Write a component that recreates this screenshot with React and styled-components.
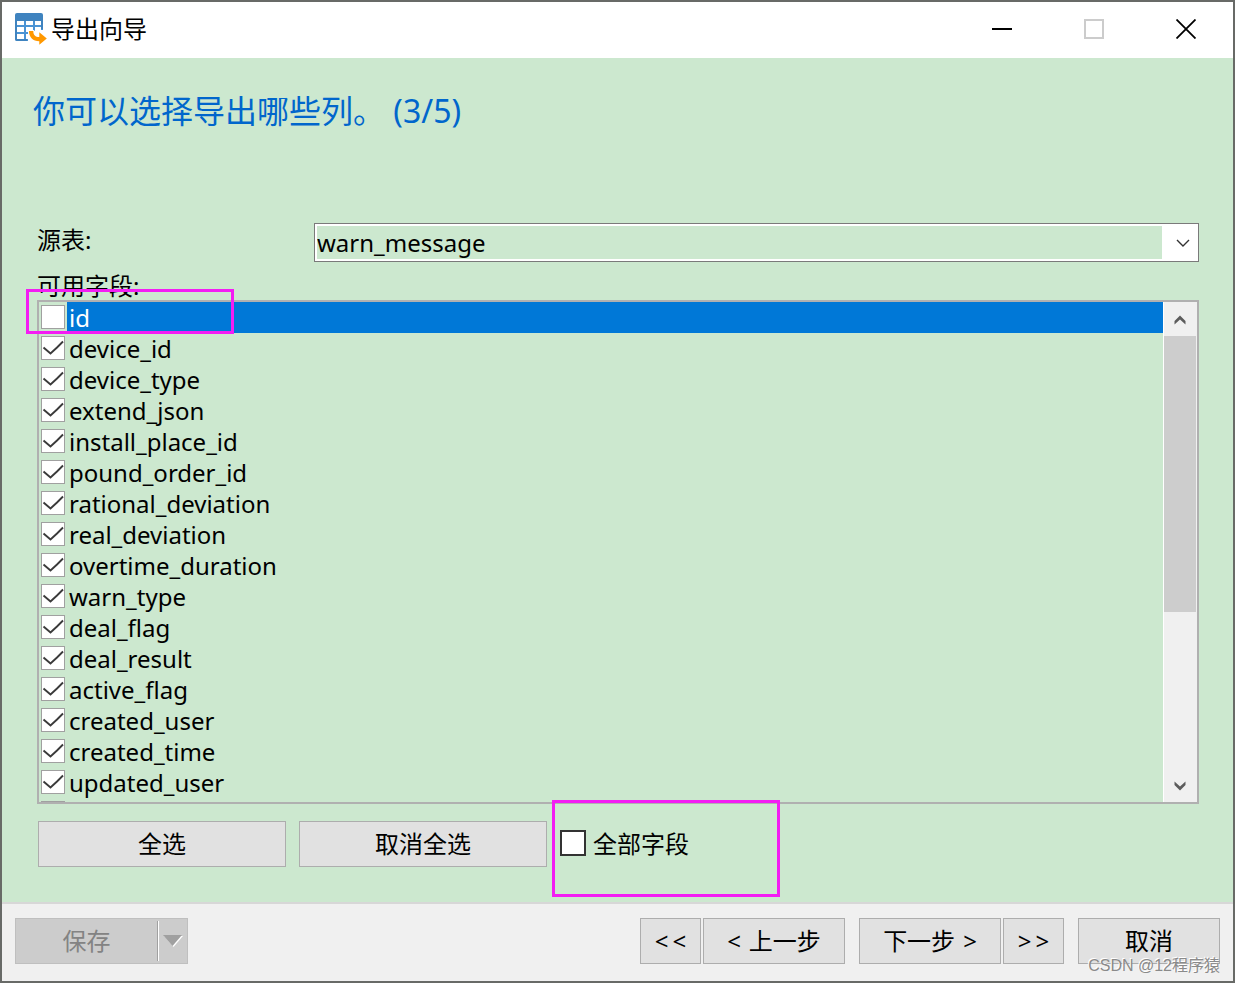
import React, { useState } from "react";
import styled, { createGlobalStyle } from "styled-components";

const colors = {
  paper: "#cce8cf",
  face: "#f0f0f0",
  button: "#e1e1e1",
  line: "#adadad",
  select: "#0078d7",
  title: "#0066cc",
  marker: "#f31df3",
};

const fields = [
  "id",
  "device_id",
  "device_type",
  "extend_json",
  "install_place_id",
  "pound_order_id",
  "rational_deviation",
  "real_deviation",
  "overtime_duration",
  "warn_type",
  "deal_flag",
  "deal_result",
  "active_flag",
  "created_user",
  "created_time",
  "updated_user",
  "",
];

const GlobalStyle = createGlobalStyle`
  *, *::before, *::after {
    box-sizing: border-box;
  }

  body {
    margin: 0;
    color: #000;
    font-family: "Noto Sans", "Noto Sans CJK SC", sans-serif;
    font-size: 24px;
  }

  button, select, input {
    margin: 0;
    color: inherit;
    font: inherit;
  }
`;

const Window = styled.div`
  position: relative;
  display: flex;
  flex-direction: column;
  height: 100vh;
  min-height: 640px;
  border: 2px solid #686a67;
  background: ${colors.paper};
`;

const TitleBar = styled.header`
  display: flex;
  align-items: center;
  height: 56px;
  padding: 0 1px 2px 13px;
  background: #fff;
`;

const Caption = styled.span`
  flex: 1;
  padding-left: 4px;
  line-height: 32px;
`;

const WindowButton = styled.button`
  display: flex;
  align-items: center;
  justify-content: center;
  width: 92px;
  height: 100%;
  padding: 0;
  border: none;
  background: none;
`;

const Content = styled.main`
  position: relative;
  display: flex;
  flex: 1;
  flex-direction: column;
  min-height: 0;
  padding: 28px 34px 35px 35px;
`;

const Heading = styled.h1`
  margin: 0 0 87px -4px;
  color: ${colors.title};
  font-size: 32px;
  font-weight: 400;
  line-height: 50px;
`;

const SourceRow = styled.div`
  display: flex;
  align-items: flex-start;
  margin-bottom: 10px;
`;

const SourceLabel = styled.label`
  width: 277px;
  line-height: 34px;
`;

const SelectBox = styled.div`
  position: relative;
  flex: 1;

  svg {
    position: absolute;
    top: 16px;
    right: 9px;
    pointer-events: none;
  }
`;

const Select = styled.select`
  display: block;
  width: 100%;
  height: 39px;
  padding: 2px 36px 2px 2px;
  border: 1px solid #7a7a7a;
  border-radius: 0;
  appearance: none;
  background: linear-gradient(${colors.paper}, ${colors.paper}) content-box, #fff;
`;

const FieldsLabel = styled.div`
  line-height: 28px;
`;

const FieldBox = styled.div`
  display: flex;
  flex: 1;
  min-height: 0;
  border: 2px solid #b0b0b0;
`;

const FieldList = styled.div`
  flex: 1;
  overflow: hidden;
`;

const FieldRow = styled.label`
  display: flex;
  align-items: flex-start;
  column-gap: 2px;
  height: 31px;
  padding-left: 2px;
`;

const FieldName = styled.span`
  flex: 1;
  padding-left: 2px;
  line-height: 31px;
  color: ${({ $active }) => ($active ? "#fff" : "inherit")};
  background: ${({ $active }) => ($active ? colors.select : "none")};
`;

const CheckCell = styled.span`
  display: grid;
  padding: ${({ $large }) => ($large ? "0 0 2px" : "3px 0 0")};

  input, svg {
    grid-area: 1 / 1;
  }

  svg {
    visibility: hidden;
    pointer-events: none;
  }

  input:checked + svg {
    visibility: visible;
  }
`;

const Tick = styled.input`
  width: ${({ $large }) => ($large ? 26 : 24)}px;
  height: ${({ $large }) => ($large ? 26 : 24)}px;
  border: ${({ $large }) => ($large ? "2px solid #333" : "1px solid #a0a0a0")};
  appearance: none;
  background: #fff;
`;

const ScrollBar = styled.div`
  display: flex;
  flex-direction: column;
  width: 34px;
  padding-right: 1px;
  border-left: 1px solid #fff;
  background: ${colors.face};
`;

const ScrollButton = styled.button`
  display: flex;
  align-items: center;
  justify-content: center;
  height: 34px;
  padding: 2px 0 0;
  border: none;
  background: none;
`;

const ScrollTrack = styled.div`
  flex: 1;
`;

const ScrollThumb = styled.div`
  height: 64%;
  background: #cdcdcd;
`;

const Actions = styled.div`
  display: flex;
  align-items: center;
  column-gap: 13px;
  margin-top: 17px;
  padding-left: 1px;
`;

const Button = styled.button`
  display: flex;
  align-items: center;
  justify-content: center;
  column-gap: ${({ $gap = 0 }) => $gap}px;
  width: ${({ $width }) => $width}px;
  height: 46px;
  padding: 0;
  border: 1px solid ${colors.line};
  background: ${colors.button};
  line-height: 44px;
  white-space: nowrap;
`;

const AllFields = styled.label`
  display: flex;
  align-items: center;
  column-gap: 7px;
  line-height: 46px;
`;

const Footer = styled.footer`
  display: flex;
  align-items: center;
  justify-content: space-between;
  padding: 14px 13px 17px;
  border-top: 2px solid #d7d7d7;
  background: ${colors.face};
`;

const SplitButton = styled.div`
  display: flex;
  align-items: center;
  height: 46px;
  border: 1px solid #bfbfbf;
  background: #ccc;
`;

const SplitPart = styled.button`
  display: flex;
  align-items: center;
  justify-content: center;
  width: ${({ $width }) => $width}px;
  height: 40px;
  padding: 0;
  border: none;
  background: none;
  color: #838383;
  line-height: 40px;

  & + & {
    border-left: 1px solid #a0a0a0;
    box-shadow: inset 1px 0 #fff;
  }
`;

const Steps = styled.div`
  display: flex;
  column-gap: 14px;
`;

const StepPair = styled.div`
  display: flex;
  column-gap: 2px;
`;

const Marker = styled.div`
  position: absolute;
  top: ${({ $top }) => $top}px;
  left: ${({ $left }) => $left}px;
  width: ${({ $width }) => $width}px;
  height: ${({ $height }) => $height}px;
  border: 3px solid ${colors.marker};
  pointer-events: none;
`;

const Watermark = styled.span`
  position: absolute;
  right: 13px;
  bottom: 3px;
  color: #8a8a8a;
  font-family: "Liberation Sans", "Noto Sans CJK SC", sans-serif;
  font-size: 16px;
  line-height: 24px;
  text-shadow: -1px -1px #fff;
  pointer-events: none;
`;

const TableIcon = () => (
  <svg width="32" height="32" viewBox="0 0 32 32" aria-hidden="true">
    <path d="M2 0h24q2 0 2 2v6H0V2q0-2 2-2z" fill="#3f83bf" />
    <path d="M0 8h28v10H13v10H2q-2 0-2-2z" fill="#4a93d4" />
    <path d="M0 8h2v18h10v2H2q-2 0-2-2zM26 8h2v8h-2z" fill="#3f83bf" />
    <path
      d="M2 8h7v4H2zM11 8h7v4h-7zM20 8h6v4h-6zM2 14h7v5H2zM11 14h7v5h-7zM20 14h6v5h-6zM2 21h7v5H2zM11 21h3v5h-3z"
      fill="#fff"
    />
    <path d="M13 17h6.300c0 4 2 6 4 6v-6H28v11H13z" fill="#fff" />
    <path
      d="M14 18h4.300c0 4 2 6 6 6v-4.700l7.500 6.200-7.500 6.200v-3.400C18 28.300 14 24.300 14 18z"
      fill="#ff9800"
    />
  </svg>
);

const Chevron = ({ up }) => (
  <svg width="12" height="10" viewBox="0 0 12 10" aria-hidden="true">
    <path
      d={
        up
          ? "M6 .5 11.500 6v3.500L6 4.500.5 9.500V6z"
          : "M6 9.500 11.500 4V.5L6 5.500.5.5V4z"
      }
      fill="#5c5c5c"
    />
  </svg>
);

const CheckBox = ({ large, ...props }) => (
  <CheckCell $large={large}>
    <Tick type="checkbox" $large={large} {...props} />
    <svg width="24" height="24" viewBox="0 0 24 24" aria-hidden="true">
      <path
        d="M2.500 11.500 9.500 17.500 16 11.500 22 5.500"
        fill="none"
        stroke="#3a3a3a"
        strokeWidth="1.900"
      />
    </svg>
  </CheckCell>
);

const App = () => {
  const [active, setActive] = useState("id");

  return (
    <>
      <GlobalStyle />
      <Window>
        <TitleBar>
          <TableIcon />
          <Caption>导出向导</Caption>
          <WindowButton aria-label="最小化">
            <svg width="20" height="20" viewBox="0 0 20 20">
              <path d="M0 10h20" stroke="#000" strokeWidth="2" />
            </svg>
          </WindowButton>
          <WindowButton aria-label="最大化" disabled>
            <svg width="20" height="20" viewBox="0 0 20 20">
              <path
                d="M1 1h18v18H1z"
                fill="none"
                stroke="#ccc"
                strokeWidth="2"
              />
            </svg>
          </WindowButton>
          <WindowButton aria-label="关闭">
            <svg width="20" height="20" viewBox="0 0 20 20">
              <path
                d="M.5.5l19 19M19.500.5l-19 19"
                stroke="#000"
                strokeWidth="1.800"
              />
            </svg>
          </WindowButton>
        </TitleBar>

        <Content>
          <Heading>你可以选择导出哪些列。 (3/5)</Heading>
          <SourceRow>
            <SourceLabel htmlFor="source">源表:</SourceLabel>
            <SelectBox>
              <Select id="source">
                <option>warn_message</option>
              </Select>
              <svg width="14" height="9" viewBox="0 0 14 9" aria-hidden="true">
                <path
                  d="M1 1l6 6 6-6"
                  fill="none"
                  stroke="#333"
                  strokeWidth="1.400"
                />
              </svg>
            </SelectBox>
          </SourceRow>

          <FieldsLabel id="fields">可用字段:</FieldsLabel>
          <FieldBox role="group" aria-labelledby="fields">
            <FieldList>
              {fields.map((field) => (
                <FieldRow key={field} onClick={() => setActive(field)}>
                  <CheckBox defaultChecked={field !== "id"} />
                  <FieldName $active={field === active}>{field}</FieldName>
                </FieldRow>
              ))}
            </FieldList>
            <ScrollBar>
              <ScrollButton aria-label="向上">
                <Chevron up />
              </ScrollButton>
              <ScrollTrack>
                <ScrollThumb />
              </ScrollTrack>
              <ScrollButton aria-label="向下">
                <Chevron />
              </ScrollButton>
            </ScrollBar>
          </FieldBox>

          <Actions>
            <Button $width={248}>全选</Button>
            <Button $width={248}>取消全选</Button>
            <AllFields>
              <CheckBox large />
              全部字段
            </AllFields>
          </Actions>

          <Marker $top={231} $left={24} $width={208} $height={45} />
          <Marker $top={742} $left={550} $width={228} $height={97} />
        </Content>

        <Footer>
          <SplitButton>
            <SplitPart $width={141} disabled>
              保存
            </SplitPart>
            <SplitPart $width={30} aria-label="保存选项" disabled>
              <svg width="20" height="12" viewBox="0 0 20 12">
                <path d="M1 1h19L10.500 12z" fill="#fff" />
                <path d="M0 0h19L9.500 11z" fill="#a0a0a0" />
              </svg>
            </SplitPart>
          </SplitButton>
          <Steps>
            <StepPair>
              <Button $width={61} $gap={4}>
                <span>&lt;</span>
                <span>&lt;</span>
              </Button>
              <Button $width={142} $gap={8}>
                <span>&lt;</span>
                <span>上一步</span>
              </Button>
            </StepPair>
            <StepPair>
              <Button $width={142} $gap={8}>
                <span>下一步</span>
                <span>&gt;</span>
              </Button>
              <Button $width={61} $gap={4}>
                <span>&gt;</span>
                <span>&gt;</span>
              </Button>
            </StepPair>
            <Button $width={142}>取消</Button>
          </Steps>
        </Footer>
        <Watermark>CSDN @12程序猿</Watermark>
      </Window>
    </>
  );
};

export default App;
